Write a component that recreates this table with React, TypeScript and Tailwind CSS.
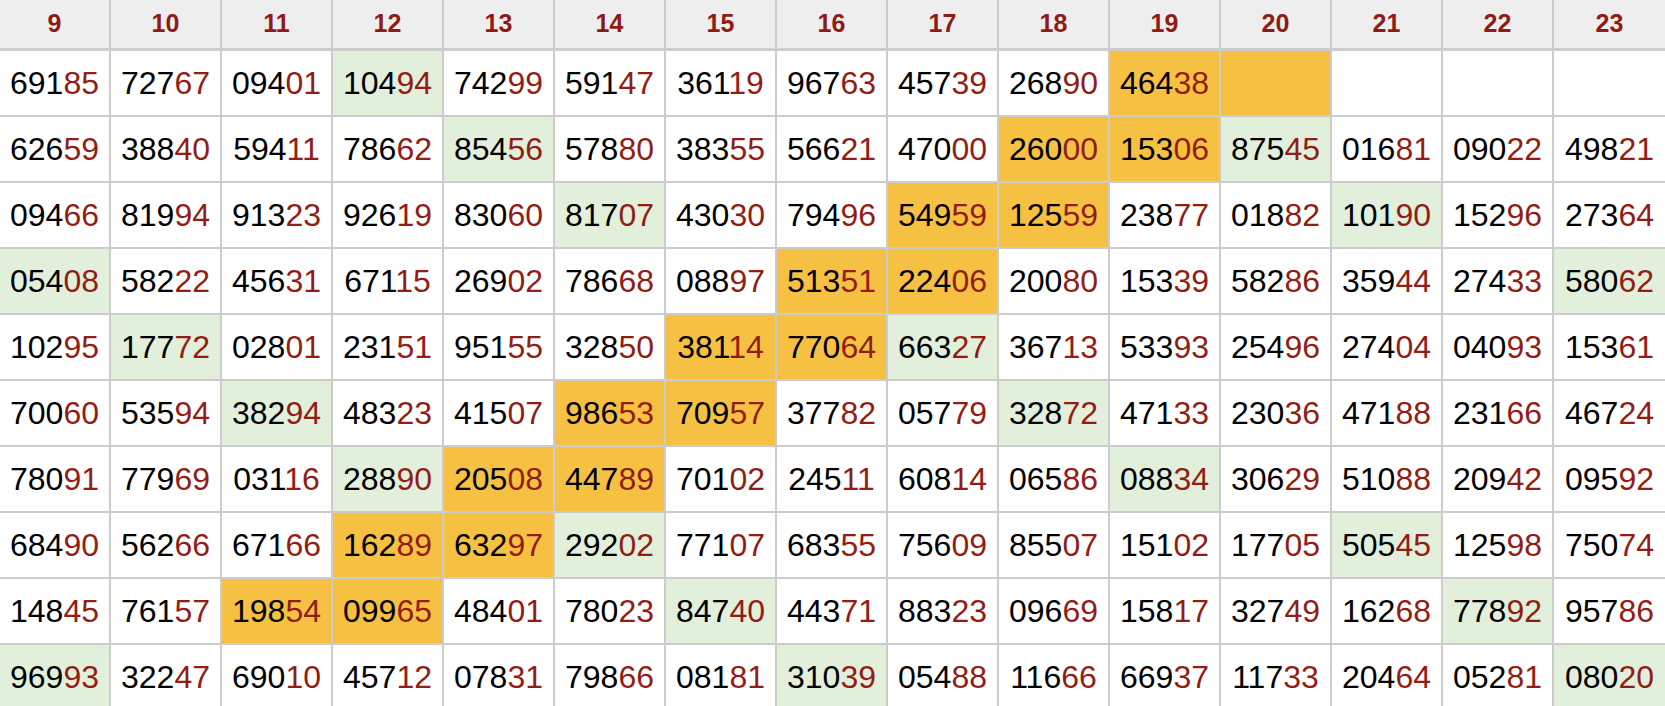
import React from "react";

type Cell = { v: string; c?: "g" | "o" };

const headers = [9, 10, 11, 12, 13, 14, 15, 16, 17, 18, 19, 20, 21, 22, 23];

const raw: string[] = [
  "69185 72767 09401 10494g 74299 59147 36119 96763 45739 26890 46438o o - - -",
  "62659 38840 59411 78662 85456g 57880 38355 56621 47000 26000o 15306o 87545g 01681 09022 49821",
  "09466 81994 91323 92619 83060 81707g 43030 79496 54959o 12559o 23877 01882 10190g 15296 27364",
  "05408g 58222 45631 67115 26902 78668 08897 51351o 22406o 20080 15339 58286 35944 27433 58062g",
  "10295 17772g 02801 23151 95155 32850 38114o 77064o 66327g 36713 53393 25496 27404 04093 15361",
  "70060 53594 38294g 48323 41507 98653o 70957o 37782 05779 32872g 47133 23036 47188 23166 46724",
  "78091 77969 03116 28890g 20508o 44789o 70102 24511 60814 06586 08834g 30629 51088 20942 09592",
  "68490 56266 67166 16289o 63297o 29202g 77107 68355 75609 85507 15102 17705 50545g 12598 75074",
  "14845 76157 19854o 09965o 48401 78023 84740g 44371 88323 09669 15817 32749 16268 77892g 95786",
  "96993g 32247 69010 45712 07831 79866 08181 31039g 05488 11666 66937 11733 20464 05281 08020g",
];

const rows: Cell[][] = raw.map((r) =>
  r.split(" ").map((t) => {
    if (t === "-") return { v: "" };
    const last = t[t.length - 1];
    if (last === "g" || last === "o") return { v: t.slice(0, -1), c: last };
    return { v: t };
  })
);

export default function App() {
  return (
    <div
      className="w-[1665px] h-[706px] overflow-hidden bg-white"
      style={{ fontFamily: '"Liberation Sans", Arial, Helvetica, sans-serif' }}
    >
      <div className="grid grid-cols-[repeat(15,111px)]">
        {headers.map((h, i) => (
          <div
            key={"h" + h}
            className={`h-[51px] bg-[#eeeeee] border-b-[3px] border-[#cccccc] flex items-center justify-center pb-[2px] text-[25px] leading-none font-bold text-[#8e1b14] ${
              i < 14 ? "border-r-2" : ""
            }`}
          >
            {h}
          </div>
        ))}
        {rows.map((row, ri) =>
          row.map((cell, ci) => (
            <div
              key={ri + "-" + ci}
              className={`h-[66px] border-b-2 border-[#cccccc] flex items-center justify-center text-[32px] leading-none ${
                ci < 14 ? "border-r-2" : ""
              } ${
                cell.c === "g"
                  ? "bg-[#e2efda]"
                  : cell.c === "o"
                  ? "bg-[#f6c142]"
                  : "bg-white"
              }`}
            >
              {cell.v && (
                <span>
                  <span className="text-black">{cell.v.slice(0, 3)}</span>
                  <span className="text-[#911d16]">{cell.v.slice(3)}</span>
                </span>
              )}
            </div>
          ))
        )}
      </div>
    </div>
  );
}
